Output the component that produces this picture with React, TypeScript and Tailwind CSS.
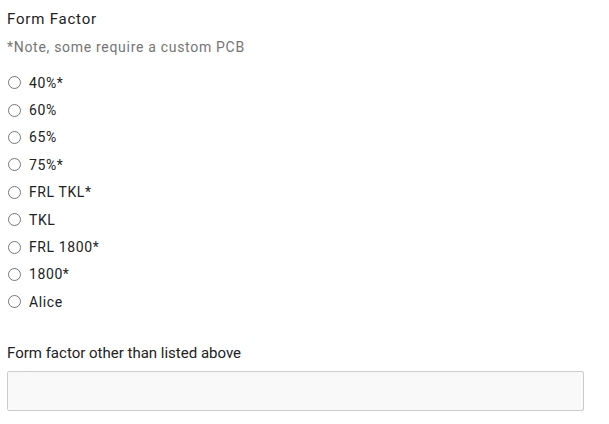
import React, { useState } from 'react';

const options = ['40%*', '60%', '65%', '75%*', 'FRL TKL*', 'TKL', 'FRL 1800*', '1800*', 'Alice'];

const App: React.FC = () => {
  const [selected, setSelected] = useState<string | null>(null);
  const [other, setOther] = useState('');

  return (
    <div className="min-h-screen bg-white pl-[7px] pr-[25px] pt-[9px] font-['Roboto',sans-serif] text-[#222]">
      <div className="text-[15px] leading-[20px] tracking-[0.8px]">Form Factor</div>
      <div className="mt-[8px] text-[14px] leading-[20px] tracking-[0.7px] text-[#757575]">*Note, some require a custom PCB</div>
      <div className="mt-[12px] flex flex-col">
        {options.map((opt) => (
          <label key={opt} className="flex h-[27.4px] items-center cursor-pointer">
            <span className="ml-[1px] flex h-[13px] w-[13px] items-center justify-center rounded-full border border-[#767676] bg-white">
              {selected === opt && <span className="h-[7px] w-[7px] rounded-full bg-[#333]" />}
            </span>
            <input
              type="radio"
              name="formFactor"
              className="hidden"
              checked={selected === opt}
              onChange={() => setSelected(opt)}
            />
            <span className="ml-[8px] text-[14px] leading-[20px] tracking-[0.6px]">{opt}</span>
          </label>
        ))}
      </div>
      <div className="mt-[27px] text-[15px] leading-[20px]">Form factor other than listed above</div>
      <input
        type="text"
        value={other}
        onChange={(e) => setOther(e.target.value)}
        className="mt-[8px] block h-[40px] w-full rounded-[2px] border border-[#cccccc] bg-[#f9f9f9] px-3 text-[14px] outline-none"
      />
    </div>
  );
};

export default App;
